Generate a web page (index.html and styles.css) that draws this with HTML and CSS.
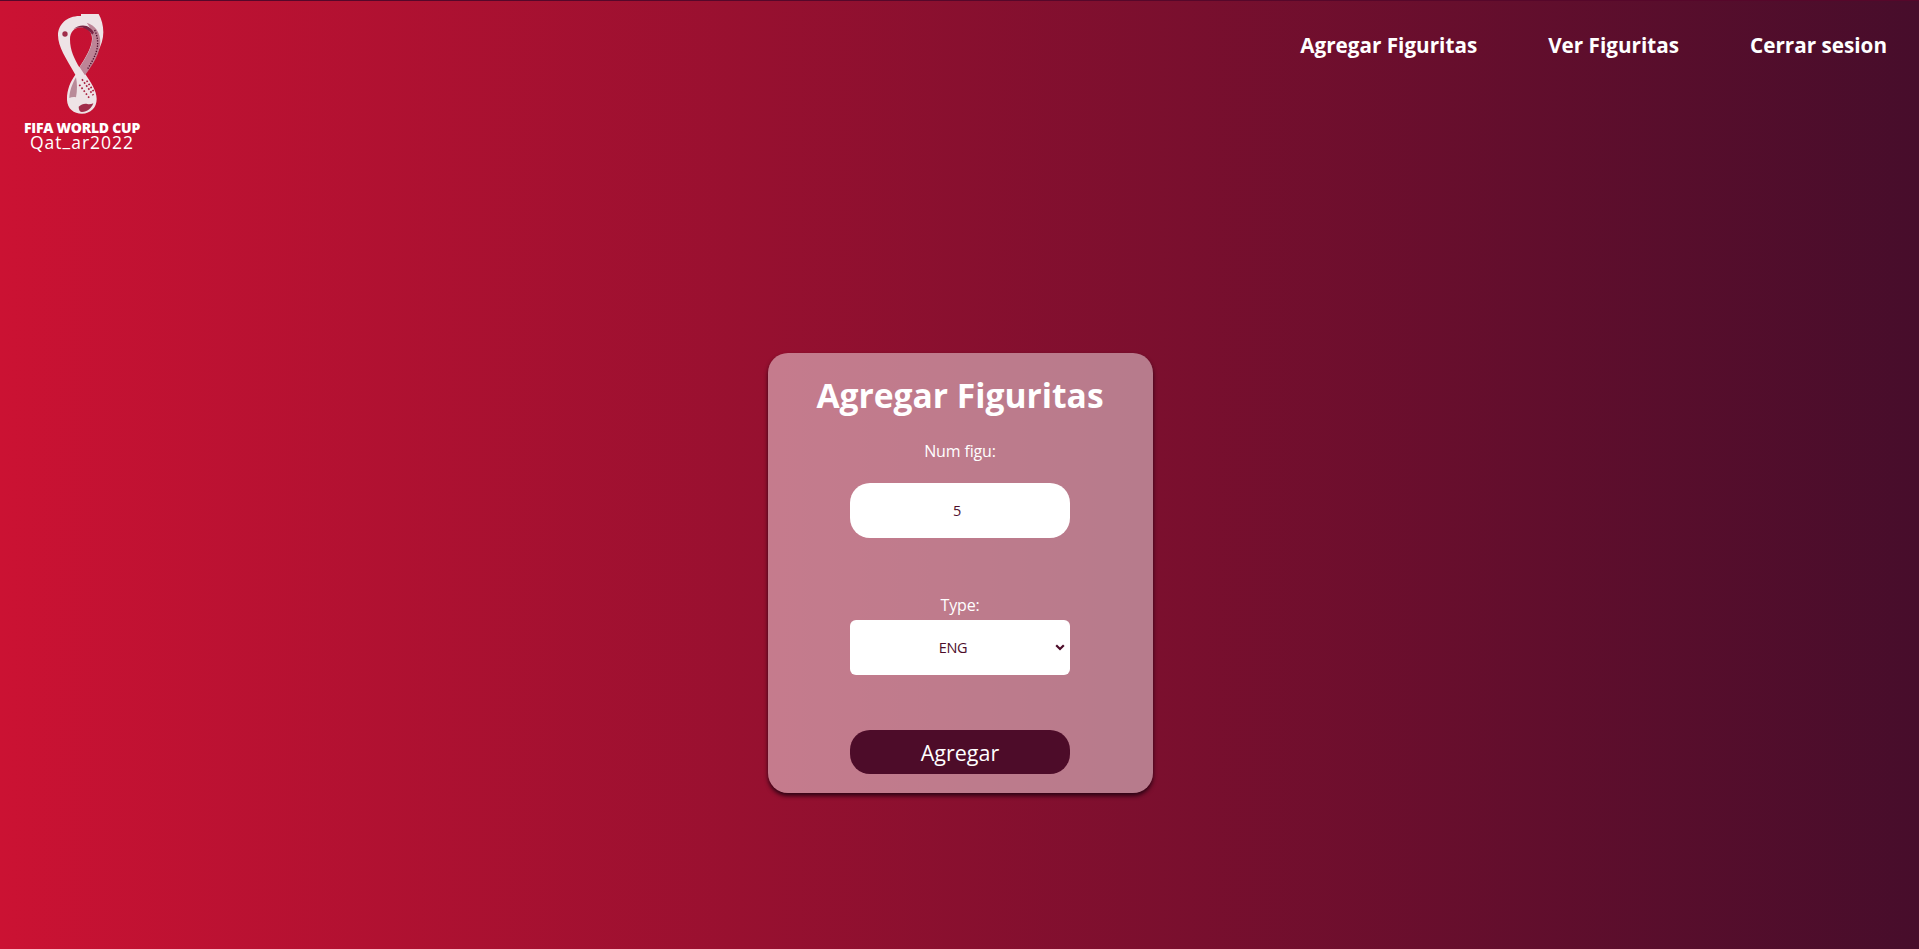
FILE: index.html
```html
<!DOCTYPE html>
<html lang="es">
<head>
<meta charset="utf-8">
<title>Agregar Figuritas</title>
<link rel="stylesheet" href="styles.css">
</head>
<body>
<div class="page">
  <header class="topbar">
    <a class="logo" href="#">
      <svg class="logo-mark" viewBox="170 36 150 306" width="50" height="102" aria-hidden="true">
        <path class="mark-band" d="M245 42C205 40 176 66 176 100c0 34 24 70 52 118-16 22-26 48-25 76 1 26 20 41 45 41 26 0 44-18 44-44 0-26-18-50-36-78 30-44 56-82 56-122 0-50-30-89-67-91zM245 76c22 0 34 16 33 36-1 26-20 56-38 84-14-24-28-50-28-84 0-20 12-36 33-36z"/>
        <path class="mark-shade" d="M262 62c26 8 41 30 41 56 0 36-22 70-46 102l-16-24c18-28 37-58 38-84 1-20-6-36-17-50z"/>
        <path class="mark-dark" d="M222 82c10-10 26-14 40-10 8 3 16 10 22 20l-6 6c-6-10-18-20-34-22-8 0-16 2-22 6z"/>
        <circle class="mark-spot" cx="197" cy="96" r="8"/>
        <path class="mark-dots" d="M286 84c10 22 12 44 4 68-6 18-16 34-26 50"/>
        <path class="mark-lower" d="M230 226c-12 20-20 44-20 62 6-2 12-4 20-2 4-20 4-40 0-60z"/>
        <path class="mark-dots-red" d="M248 232l34 48M240 248l30 40M262 236l22 34"/>
        <path class="mark-spot" d="M238 314c8-6 16-10 26-8 6 2 12 0 18-2-6 16-18 26-34 26-6 0-10-6-10-16z"/>
      </svg>
      <span class="logo-line1">FIFA WORLD CUP</span>
      <span class="logo-line2">Qat<span class="logo-bar">_</span>ar2022</span>
    </a>
    <nav class="nav">
      <a href="#">Agregar Figuritas</a>
      <a href="#">Ver Figuritas</a>
      <a href="#">Cerrar sesion</a>
    </nav>
  </header>
  <main class="content">
    <form class="card">
      <h1 class="card-title">Agregar Figuritas</h1>
      <label class="field-label label-num" for="num">Num figu:</label>
      <input class="field-input" id="num" type="text" value="5">
      <label class="field-label label-type" for="type">Type:</label>
      <div class="select-wrap">
        <select class="field-select" id="type">
          <option>ENG</option>
        </select>
        <svg class="select-arrow" viewBox="0 0 10 7" width="10" height="7" aria-hidden="true"><path d="M1.200 1.200 5 5l3.800-3.800"/></svg>
      </div>
      <button class="submit" type="button">Agregar</button>
    </form>
  </main>
</div>
</body>
</html>
```
FILE: styles.css
```css
* { box-sizing: border-box; }
html, body { margin: 0; height: 100%; }
body {
  font-family: "Open Sans", "Noto Sans", "Liberation Sans", sans-serif;
  color: #fff;
  overflow: hidden;
}
.page {
  height: 949px;
  display: flex;
  flex-direction: column;
  background: linear-gradient(90deg, #cb1233 0%, #470d2b 100%);
  border-top: 1px solid #56072a;
}
.topbar {
  display: flex;
  justify-content: space-between;
  align-items: flex-start;
  height: 352px;
  padding: 13px 32px 0 22px;
}
.logo {
  display: flex;
  flex-direction: column;
  align-items: center;
  width: 120px;
  color: #fff;
  text-decoration: none;
}
.logo-mark { display: block; margin-left: -2px; }
.mark-band { fill: #eee3e6; fill-rule: evenodd; }
.mark-shade { fill: #bd8496; }
.mark-dark { fill: #7a2444; }
.mark-spot { fill: #a02c4a; }
.mark-lower { fill: #b98a98; }
.mark-dots { fill: none; stroke: #4d0c29; stroke-width: 4; stroke-dasharray: 4 4; }
.mark-dots-red { fill: none; stroke: #a8203f; stroke-width: 5; stroke-dasharray: 5 6; }
.logo-line1 {
  font-size: 14px;
  font-weight: 800;
  line-height: 13px;
  margin-top: 5px;
  white-space: nowrap;
  letter-spacing: -0.250px;
}
.logo-line2 {
  font-size: 17.500px;
  line-height: 11px;
  white-space: nowrap;
  letter-spacing: 1px;
}
.logo-bar { vertical-align: 3px; }
.nav {
  display: flex;
  gap: 71px;
  margin-top: 16px;
}
.nav a {
  color: #fff;
  text-decoration: none;
  font-size: 20.700px;
  font-weight: 700;
  line-height: 30px;
}
.content {
  flex: 1;
  display: flex;
  justify-content: center;
  align-items: flex-start;
  padding-left: 1px;
}
.card {
  width: 385px;
  height: 440px;
  display: flex;
  flex-direction: column;
  align-items: center;
  background: rgba(255, 255, 255, 0.45);
  border-radius: 20px;
  box-shadow: 0 3px 4px rgba(30, 0, 15, 0.85);
}
.card-title {
  margin: 19px 0 0;
  font-size: 33.600px;
  font-weight: 700;
  line-height: 46px;
}
.field-label {
  font-size: 16px;
  line-height: 22px;
  letter-spacing: -0.150px;
}
.label-num { margin-top: 22px; }
.label-type { margin-top: 56px; }
.field-input, .field-select {
  width: 220px;
  height: 55px;
  border: 0;
  background: #fff;
  color: #4d0c29;
  font-family: inherit;
  font-size: 14.500px;
  letter-spacing: -0.400px;
  text-align: center;
  outline: none;
}
.field-input { margin-top: 21px; border-radius: 20px; padding: 0 6px 0 0; }
.select-wrap { position: relative; margin-top: 4px; }
.field-select {
  display: block;
  appearance: none;
  border-radius: 6px;
  padding: 0 14px 0 0;
}
.select-arrow {
  position: absolute;
  top: 24px;
  right: 5px;
  pointer-events: none;
}
.select-arrow path { fill: none; stroke: #4d0c29; stroke-width: 2.200; }
.submit {
  width: 220px;
  height: 44px;
  margin-top: 55px;
  border: 0;
  border-radius: 20px;
  background: #4d0c29;
  color: #fff;
  font-family: inherit;
  font-size: 21.500px;
  padding: 0;
}
```
